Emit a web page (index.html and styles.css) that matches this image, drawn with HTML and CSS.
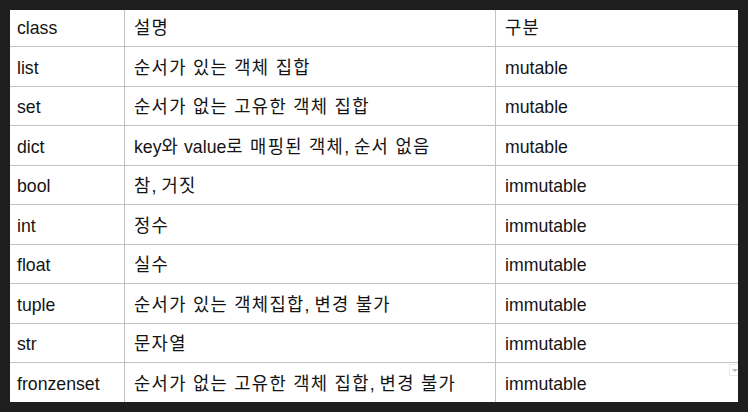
FILE: index.html
```html
<!DOCTYPE html>
<html lang="ko">
<head>
<meta charset="utf-8">
<title>Python collection types</title>
<link rel="stylesheet" href="styles.css">
</head>
<body>
<div class="frame">
  <table class="grid">
    <colgroup>
      <col class="c1">
      <col class="c2">
      <col class="c3">
    </colgroup>
    <tr><td>class</td><td><span class="ko">설명</span></td><td><span class="ko">구분</span></td></tr>
    <tr><td>list</td><td><span class="ko">순서가 있는 객체 집합</span></td><td>mutable</td></tr>
    <tr><td>set</td><td><span class="ko">순서가 없는 고유한 객체 집합</span></td><td>mutable</td></tr>
    <tr><td>dict</td><td>key<span class="ko">와</span> value<span class="ko">로 매핑된 객체</span>, <span class="ko">순서 없음</span></td><td>mutable</td></tr>
    <tr><td>bool</td><td><span class="ko">참</span>, <span class="ko">거짓</span></td><td>immutable</td></tr>
    <tr><td>int</td><td><span class="ko">정수</span></td><td>immutable</td></tr>
    <tr><td>float</td><td><span class="ko">실수</span></td><td>immutable</td></tr>
    <tr><td>tuple</td><td><span class="ko">순서가 있는 객체집합</span>, <span class="ko">변경 불가</span></td><td>immutable</td></tr>
    <tr><td>str</td><td><span class="ko">문자열</span></td><td>immutable</td></tr>
    <tr><td>fronzenset</td><td><span class="ko">순서가 없는 고유한 객체 집합</span>, <span class="ko">변경 불가</span></td><td>immutable</td></tr>
  </table>
  <span class="dropdown"></span>
</div>
</body>
</html>
```

FILE: styles.css
```css
html, body {
  margin: 0;
  padding: 0;
  background: #1e1e1e;
}

.frame {
  position: relative;
  margin: 10px;
  width: 728px;
  height: 392px;
  background: #ffffff;
  overflow: hidden;
}

.grid {
  border-collapse: collapse;
  table-layout: fixed;
  width: 740px;
  margin-top: -3.5px;
  margin-left: -3px;
  font-family: "Liberation Sans", Arial, "Noto Sans CJK KR", sans-serif;
  font-size: 17.7px;
  color: #141414;
}

.c1 { width: 117px; }
.c2 { width: 371px; }
.c3 { width: 252px; }

.grid tr {
  height: 39.5px;
}

.grid td {
  border: 1px solid #c2c2c2;
  padding: 10.5px 9px 0;
  line-height: 20px;
  vertical-align: top;
  white-space: nowrap;
}

.ko {
  letter-spacing: 1.3px;
}

.dropdown {
  position: absolute;
  right: 0;
  top: 354px;
  width: 8px;
  height: 10px;
  border: 1px solid #ececec;
  border-right: none;
  background: #ffffff;
}

.dropdown::after {
  content: "";
  position: absolute;
  left: 2px;
  top: 4px;
  border-left: 3px solid transparent;
  border-right: 3px solid transparent;
  border-top: 3px solid #b5b5b5;
}
```
